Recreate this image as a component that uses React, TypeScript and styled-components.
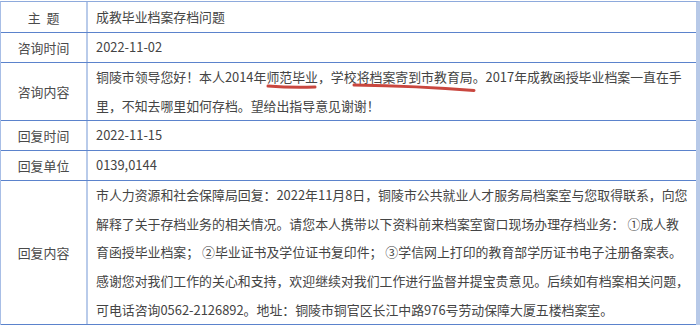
import React from "react";
import styled, { createGlobalStyle } from "styled-components";

const Global = createGlobalStyle`
  html, body { margin: 0; padding: 0; background: #ffffff; }
  body { font-family: "Noto Sans CJK SC", "Microsoft YaHei", sans-serif; }
`;

const Table = styled.div`
  margin-top: 1px;
  width: 700px;
  box-sizing: border-box;
  border-top: 1px solid #8eaadc;
  border-left: 1px solid #a8bee6;
  border-right: 4px solid #b7c9e8;
  display: flex;
  flex-direction: column;
  font-size: 12.9px;
  color: #444;
`;

const Row = styled.div<{ $min?: number }>`
  display: flex;
  border-bottom: 1px solid #5b83cc;
  min-height: ${(p) => (p.$min ? `${p.$min}px` : "auto")};
`;

const Label = styled.div`
  width: 85px;
  flex: none;
  border-right: 2px solid #b9cbea;
  display: flex;
  align-items: center;
  justify-content: center;
  white-space: pre;
  color: #4a4a4a;
`;

const Content = styled.div`
  flex: 1;
  position: relative;
  padding: 0 8px;
  line-height: 28.6px;
  display: flex;
  flex-direction: column;
  justify-content: center;
`;

const Line = styled.div`
  white-space: nowrap;
`;

const Marks = styled.svg`
  position: absolute;
  left: 0;
  top: 0;
  width: 100%;
  height: 100%;
  pointer-events: none;
  overflow: visible;
`;

export default function App() {
  return (
    <>
      <Global />
      <Table>
        <Row $min={30}>
          <Label>{"主  题"}</Label>
          <Content>
            <Line>成教毕业档案存档问题</Line>
          </Content>
        </Row>
        <Row $min={29}>
          <Label>咨询时间</Label>
          <Content>
            <Line>2022-11-02</Line>
          </Content>
        </Row>
        <Row $min={57}>
          <Label>咨询内容</Label>
          <Content>
            <Line>铜陵市领导您好！本人2014年师范毕业，学校将档案寄到市教育局。2017年成教函授毕业档案一直在手</Line>
            <Line>里，不知去哪里如何存档。望给出指导意见谢谢！</Line>
            <Marks>
              <path
                d="M180 23 Q 204 25 227 24"
                stroke="#c9473f"
                strokeWidth="3"
                strokeLinecap="round"
                fill="none"
              />
              <path
                d="M266 22 Q 330 23 386 27.5"
                stroke="#c9473f"
                strokeWidth="3"
                strokeLinecap="round"
                fill="none"
              />
            </Marks>
          </Content>
        </Row>
        <Row $min={29}>
          <Label>回复时间</Label>
          <Content>
            <Line>2022-11-15</Line>
          </Content>
        </Row>
        <Row $min={29}>
          <Label>回复单位</Label>
          <Content>
            <Line>0139,0144</Line>
          </Content>
        </Row>
        <Row $min={143}>
          <Label>回复内容</Label>
          <Content>
            <Line>市人力资源和社会保障局回复：2022年11月8日，铜陵市公共就业人才服务局档案室与您取得联系，向您</Line>
            <Line>解释了关于存档业务的相关情况。请您本人携带以下资料前来档案室窗口现场办理存档业务： ①成人教</Line>
            <Line>育函授毕业档案； ②毕业证书及学位证书复印件； ③学信网上打印的教育部学历证书电子注册备案表。</Line>
            <Line>感谢您对我们工作的关心和支持，欢迎继续对我们工作进行监督并提宝贵意见。后续如有档案相关问题，</Line>
            <Line>可电话咨询0562-2126892。地址：铜陵市铜官区长江中路976号劳动保障大厦五楼档案室。</Line>
          </Content>
        </Row>
      </Table>
    </>
  );
}
